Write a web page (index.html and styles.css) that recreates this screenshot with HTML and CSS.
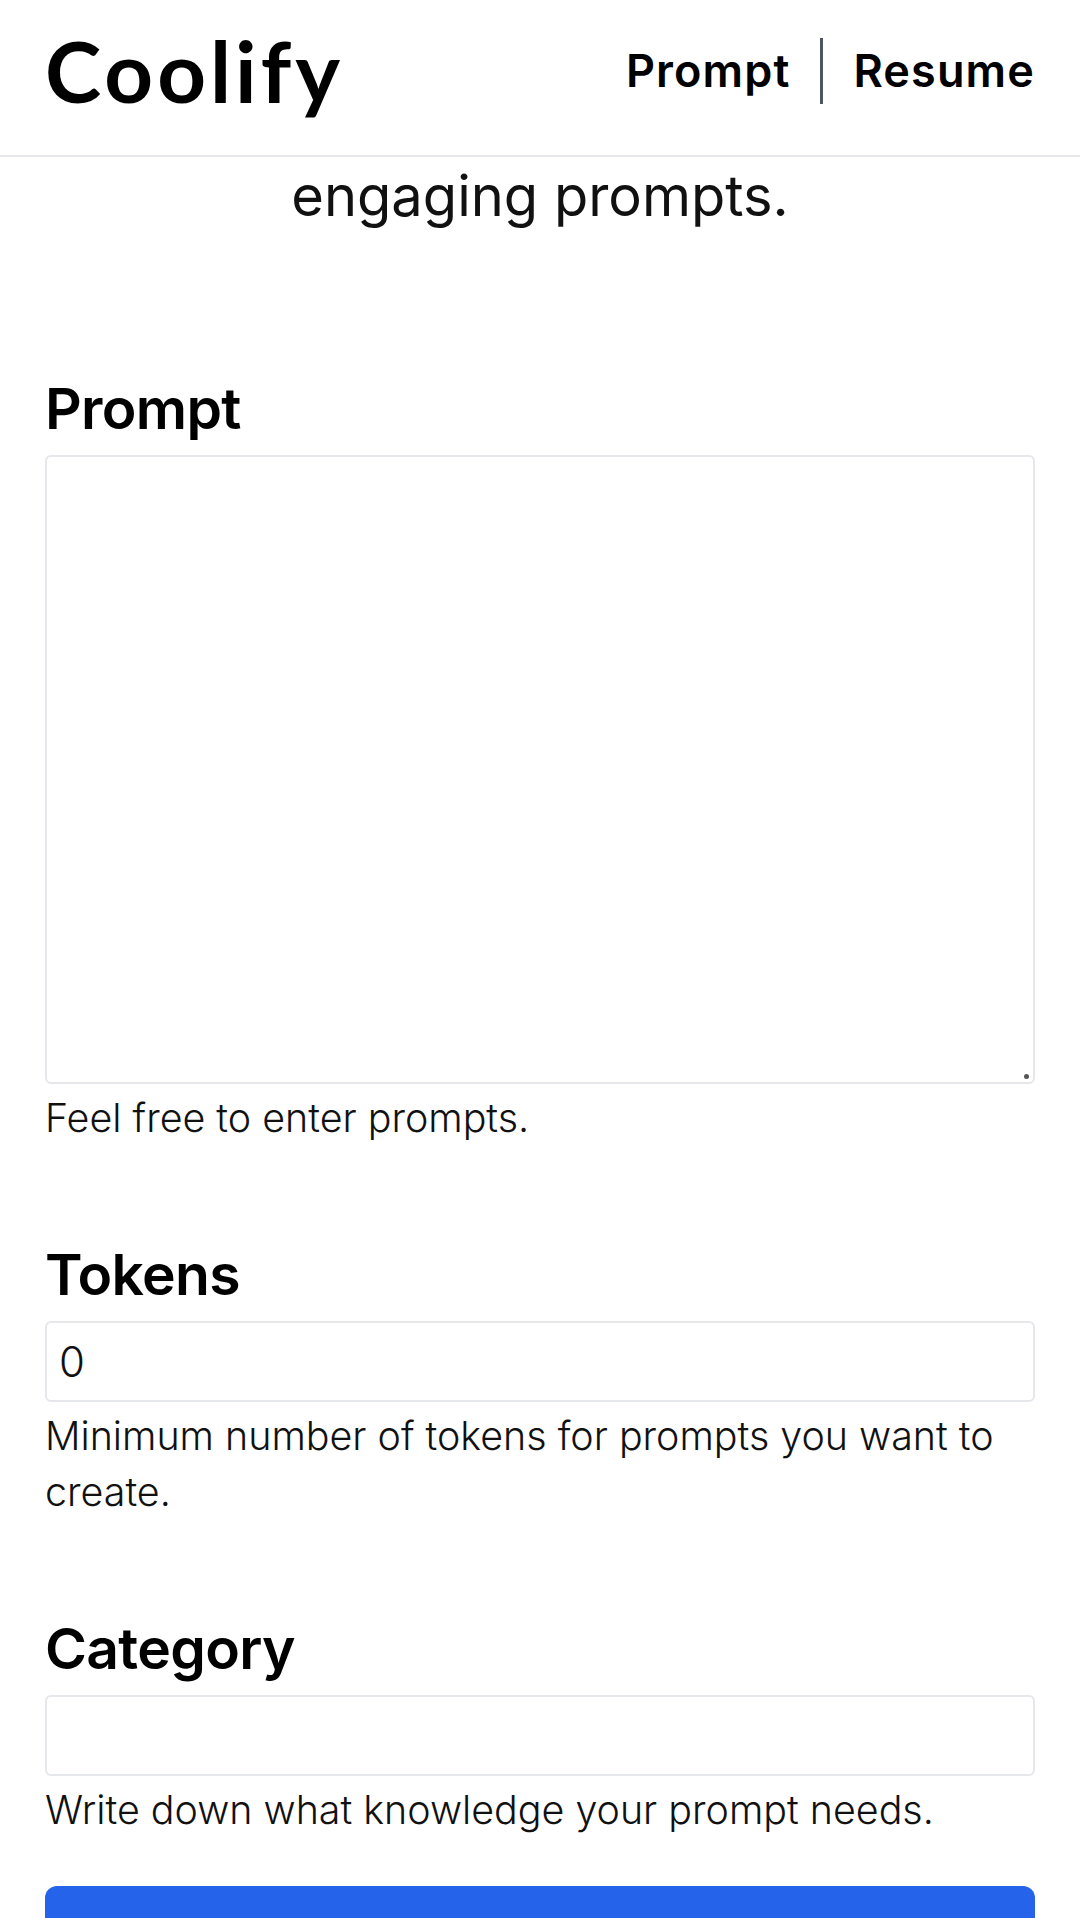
FILE: index.html
```html
<!DOCTYPE html>
<html lang="en">
<head>
<meta charset="utf-8">
<title>Coolify</title>
<link rel="stylesheet" href="styles.css">
</head>
<body>
<header class="topbar">
  <div class="logo">Coolify</div>
  <nav class="nav">
    <a class="nav-link" href="#">Prompt</a>
    <span class="nav-sep"></span>
    <a class="nav-link" href="#">Resume</a>
  </nav>
</header>
<main class="main">
  <p class="hero">engaging prompts.</p>
  <form class="form">
    <div class="field">
      <label class="label" for="prompt">Prompt</label>
      <div class="textarea-wrap">
        <textarea class="textarea" id="prompt"></textarea>
        <span class="grip"></span>
      </div>
      <p class="help">Feel free to enter prompts.</p>
    </div>
    <div class="field">
      <label class="label" for="tokens">Tokens</label>
      <input class="input" id="tokens" type="text" value="0">
      <p class="help">Minimum number of tokens for prompts you want to create.</p>
    </div>
    <div class="field">
      <label class="label" for="category">Category</label>
      <input class="input" id="category" type="text" value="">
      <p class="help">Write down what knowledge your prompt needs.</p>
    </div>
    <button class="submit" type="button">Generate</button>
  </form>
</main>
</body>
</html>
```
FILE: styles.css
```css
html, body {
  margin: 0;
  padding: 0;
  background: #ffffff;
}
body {
  font-family: Inter, "Noto Sans", "Liberation Sans", sans-serif;
  color: #111111;
}
.topbar {
  box-sizing: border-box;
  height: 157px;
  padding: 0 45px 14px 45px;
  display: flex;
  align-items: center;
  justify-content: space-between;
  border-bottom: 2px solid #e6e7ea;
}
.logo {
  font-family: Lato, Inter, sans-serif;
  font-weight: 700;
  font-size: 85px;
  line-height: 1;
  color: #000;
  letter-spacing: 4px;
}
.nav {
  display: flex;
  align-items: center;
}
.nav-link {
  font-size: 45px;
  font-weight: 600;
  letter-spacing: 0.025em;
  color: #000;
  text-decoration: none;
  line-height: 1.2;
}
.nav-sep {
  width: 3px;
  height: 66px;
  background: #4b5563;
  margin: 0 30px;
}
.main {
  padding: 0 45px;
}
.hero {
  margin: 0;
  font-size: 56px;
  line-height: 78px;
  text-align: center;
  color: #111;
}
.form {
  display: flex;
  flex-direction: column;
  margin-top: 140px;
}
.field {
  display: flex;
  flex-direction: column;
  margin-bottom: 95px;
}
.field:last-of-type {
  margin-bottom: 48px;
}
.label {
  font-size: 57px;
  line-height: 68px;
  font-weight: 600;
  letter-spacing: -0.012em;
  color: #000;
  margin-bottom: 12px;
}
.textarea-wrap {
  position: relative;
  display: flex;
}
.textarea, .input {
  box-sizing: border-box;
  width: 100%;
  border: 2px solid #e5e7eb;
  border-radius: 6px;
  background: #fff;
  font-family: Inter, sans-serif;
  font-size: 42px;
  font-weight: 300;
  color: #111;
  padding: 0 12px;
  margin: 0;
  outline: none;
}
.textarea {
  height: 629px;
  padding: 12px;
  resize: none;
}
.grip {
  position: absolute;
  right: 6px;
  bottom: 5px;
  width: 5px;
  height: 5px;
  border-radius: 50%;
  background: #555;
}
.input {
  height: 81px;
}
.help {
  margin: 6px 0 0 0;
  font-size: 39.4px;
  line-height: 56px;
  font-weight: 300;
  color: #111;
}
.submit {
  box-sizing: border-box;
  width: 100%;
  height: 130px;
  border: none;
  border-radius: 12px;
  background: #2563eb;
  color: #fff;
  font-family: Inter, sans-serif;
  font-size: 44px;
  font-weight: 600;
}
```
